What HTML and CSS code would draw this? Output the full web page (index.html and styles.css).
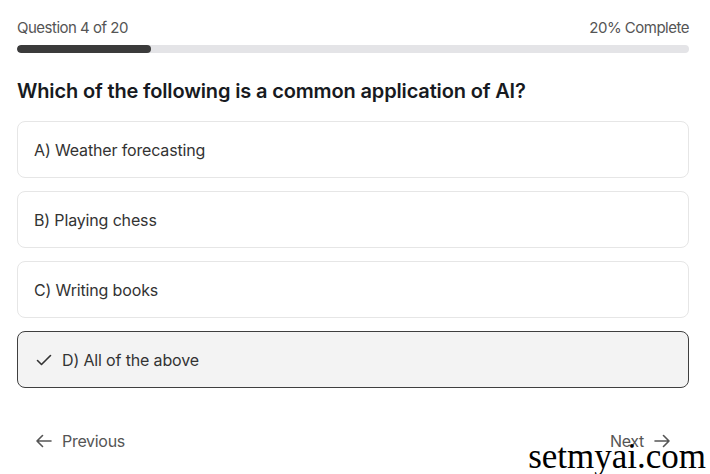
FILE: index.html
```html
<!DOCTYPE html>
<html lang="en">
<head>
<meta charset="utf-8">
<title>Quiz</title>
<link rel="stylesheet" href="styles.css">
</head>
<body>
<main class="quiz">
  <div class="progress-head">
    <span>Question 4 of 20</span>
    <span>20% Complete</span>
  </div>
  <div class="track"><div class="fill" style="width:20%"></div></div>
  <h1 class="question">Which of the following is a common application of AI?</h1>
  <div class="options">
    <button class="option">A) Weather forecasting</button>
    <button class="option">B) Playing chess</button>
    <button class="option">C) Writing books</button>
    <button class="option selected">
      <svg class="check" width="16" height="16" viewBox="0 0 16 16" fill="none" stroke="currentColor" stroke-width="1.6" stroke-linecap="round" stroke-linejoin="round"><path d="M1.5 8.5l4 4L14.5 3.5"/></svg>
      D) All of the above
    </button>
  </div>
  <div class="nav">
    <button class="nav-btn">
      <svg width="16" height="16" viewBox="0 0 16 16" fill="none" stroke="currentColor" stroke-width="1.6" stroke-linecap="round" stroke-linejoin="round"><path d="M15 8H1M6.5 2.5L1 8l5.5 5.5"/></svg>
      Previous
    </button>
    <button class="nav-btn">
      Next
      <svg width="16" height="16" viewBox="0 0 16 16" fill="none" stroke="currentColor" stroke-width="1.6" stroke-linecap="round" stroke-linejoin="round"><path d="M1 8h14M9.5 2.5L15 8l-5.5 5.5"/></svg>
    </button>
  </div>
</main>
<div class="watermark">setmyai.com</div>
</body>
</html>
```
FILE: styles.css
```css
* { box-sizing: border-box; }
html, body { margin: 0; padding: 0; background: #fff; }
body {
  font-family: "Inter", "Liberation Sans", sans-serif;
  color: #333;
  width: 710px;
  height: 474px;
  overflow: hidden;
  position: relative;
}
.quiz {
  padding: 18px 21px 0 17px;
}
.progress-head {
  display: flex;
  justify-content: space-between;
  font-size: 15px;
  line-height: 20px;
  color: #555;
  letter-spacing: -0.5px;
}
.track {
  margin-top: 7px;
  height: 8px;
  border-radius: 4px;
  background: #e4e4e7;
  overflow: hidden;
}
.fill {
  height: 100%;
  background: #3b3b3b;
  border-radius: 4px;
}
.question {
  margin: 24px 0 16px;
  font-size: 20px;
  line-height: 28px;
  font-weight: 600;
  color: #171a21;
  letter-spacing: -0.15px;
}
.options {
  display: flex;
  flex-direction: column;
  gap: 13px;
}
.option {
  display: flex;
  align-items: center;
  gap: 10px;
  height: 57px;
  padding: 0 16px;
  border: 1px solid #e6e6e6;
  border-radius: 8px;
  background: #fff;
  font-family: inherit;
  font-size: 16px;
  color: #333;
  text-align: left;
  letter-spacing: -0.15px;
}
.option.selected {
  background: #f3f3f3;
  border-color: #3f3f3f;
  padding-left: 18px;
}
.check { color: #333; flex: none; }
.nav {
  display: flex;
  justify-content: space-between;
  margin-top: 33px;
  padding: 0 19px;
}
.nav-btn {
  display: flex;
  align-items: center;
  gap: 10px;
  height: 40px;
  padding: 0;
  border: none;
  background: none;
  font-family: inherit;
  font-size: 16px;
  color: #555;
  letter-spacing: -0.3px;
}
.watermark {
  position: absolute;
  right: 4px;
  bottom: 0;
  font-family: "Liberation Serif", serif;
  font-size: 35px;
  line-height: 1;
  color: #000;
}
```
